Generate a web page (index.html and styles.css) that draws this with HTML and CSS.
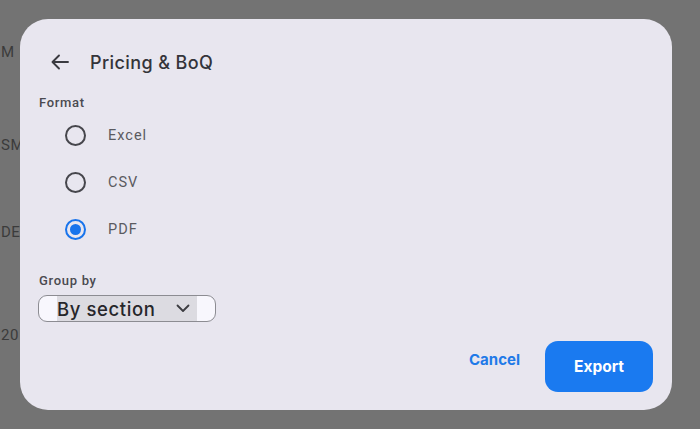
FILE: index.html
```html
<!DOCTYPE html>
<html lang="en">
<head>
<meta charset="utf-8">
<title>Pricing &amp; BoQ export</title>
<link rel="stylesheet" href="styles.css">
</head>
<body>
<div class="page">
  <div class="bg-col">
    <div class="bg-line l1">M</div>
    <div class="bg-line l2">SM</div>
    <div class="bg-line l3">DEI</div>
    <div class="bg-line l4">20</div>
  </div>
</div>
<div class="dialog">
  <div class="header">
    <svg class="back" width="24" height="24" viewBox="0 0 24 24"><path d="M20 12H5M11 5.5L4.5 12L11 18.5" fill="none" stroke="#3a3a40" stroke-width="1.9" stroke-linecap="round" stroke-linejoin="round"/></svg>
    <span class="title">Pricing &amp; BoQ</span>
  </div>
  <div class="label">Format</div>
  <div class="options">
    <div class="option"><span class="radio"></span><span class="opt-text">Excel</span></div>
    <div class="option"><span class="radio"></span><span class="opt-text">CSV</span></div>
    <div class="option"><span class="radio checked"></span><span class="opt-text">PDF</span></div>
  </div>
  <div class="label group-label">Group by</div>
  <div class="select">
    <div class="select-inner">
      <span class="select-text">By section</span>
      <svg class="chev" width="14" height="9" viewBox="0 0 14 9"><path d="M1.5 1.5L7 7L12.5 1.5" fill="none" stroke="#3c3c40" stroke-width="1.8" stroke-linecap="round" stroke-linejoin="round"/></svg>
    </div>
  </div>
  <div class="footer">
    <span class="cancel">Cancel</span>
    <span class="export">Export</span>
  </div>
</div>
</body>
</html>
```
FILE: styles.css
```css
html, body {
  margin: 0;
  padding: 0;
}
body {
  width: 700px;
  height: 429px;
  background: #737373;
  overflow: hidden;
  font-family: "Inter", "Roboto", sans-serif;
}
.page {
  height: 429px;
}
.bg-col {
  display: flex;
  flex-direction: column;
  align-items: flex-start;
  padding-left: 1px;
}
.bg-line {
  font-family: "Roboto", sans-serif;
  font-size: 15px;
  color: #3b3b3b;
  line-height: 18px;
  white-space: nowrap;
  letter-spacing: 0.5px;
}
.l1 { margin-top: 43px; }
.l2 { margin-top: 75px; }
.l3 { margin-top: 69px; }
.l4 { margin-top: 85px; }

.dialog {
  position: absolute;
  left: 20px;
  top: 19px;
  width: 652px;
  height: 391px;
  box-sizing: border-box;
  background: #e8e6ef;
  border-radius: 28px;
  padding: 23px 19px 0 19px;
  display: flex;
  flex-direction: column;
}
.header {
  height: 40px;
  display: flex;
  align-items: center;
  padding-left: 9px;
  gap: 18px;
}
.back {
  display: block;
}
.title {
  font-family: "Inter", sans-serif;
  font-size: 18px;
  font-weight: 500;
  color: #34343a;
  letter-spacing: 0.4px;
}
.label {
  margin-top: 13px;
  height: 16px;
  line-height: 16px;
  font-family: "Roboto", sans-serif;
  font-size: 13px;
  font-weight: 500;
  letter-spacing: 0.7px;
  color: #4a4a50;
}
.options {
  display: flex;
  flex-direction: column;
  margin-top: 1px;
}
.option {
  height: 47px;
  display: flex;
  align-items: center;
  padding-left: 26px;
}
.radio {
  width: 21px;
  height: 21px;
  box-sizing: border-box;
  border: 2px solid #46464c;
  border-radius: 50%;
  position: relative;
  flex: none;
}
.radio.checked {
  border-color: #1874ec;
}
.radio.checked::after {
  content: "";
  position: absolute;
  left: 3px;
  top: 3px;
  width: 11px;
  height: 11px;
  border-radius: 50%;
  background: #1874ec;
}
.opt-text {
  margin-left: 22px;
  font-family: "Roboto", sans-serif;
  font-size: 14.5px;
  letter-spacing: 1px;
  color: #5a5a60;
}
.group-label {
  margin-top: 20px;
}
.select {
  margin-top: 6px;
  margin-left: -1px;
  width: 178px;
  height: 27px;
  box-sizing: border-box;
  border: 1.5px solid #8c8c92;
  border-radius: 9px;
  background: #f8f7fd;
  padding-left: 18px;
  display: flex;
}
.select-inner {
  width: 140px;
  background: #dcdbe1;
  display: flex;
  align-items: center;
  justify-content: space-between;
  padding-right: 7px;
  box-sizing: border-box;
}
.select-text {
  font-family: "Inter", sans-serif;
  font-size: 18.5px;
  font-weight: 500;
  color: #26262a;
  letter-spacing: 0.6px;
}
.chev {
  display: block;
}
.footer {
  margin-top: 19px;
  display: flex;
  justify-content: flex-end;
  align-items: flex-start;
  gap: 25px;
}
.cancel {
  margin-top: 11px;
  line-height: 16px;
  font-family: "Inter", sans-serif;
  font-size: 15px;
  font-weight: 700;
  color: #1f7ae8;
}
.export {
  width: 108px;
  height: 51px;
  border-radius: 13px;
  background: #1a7af0;
  color: #ffffff;
  font-family: "Inter", sans-serif;
  font-size: 15.5px;
  font-weight: 700;
  display: flex;
  align-items: center;
  justify-content: center;
}
```
